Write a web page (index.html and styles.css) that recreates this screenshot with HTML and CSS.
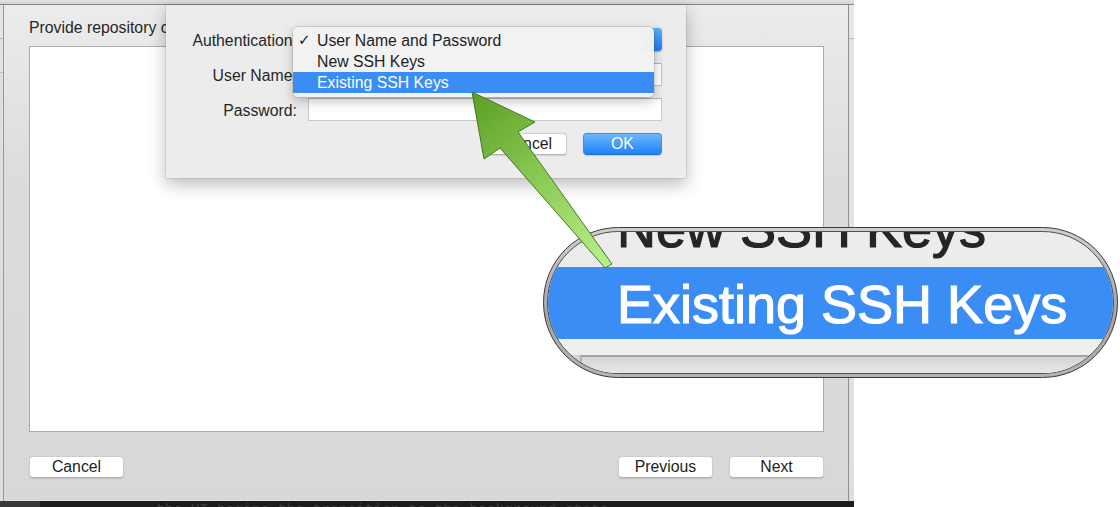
FILE: index.html
```html
<!DOCTYPE html>
<html lang="en">
<head>
    <meta charset="UTF-8">
    <meta name="viewport" content="width=device-width, initial-scale=1.0">
    <title>Repository Authentication</title>
    <link rel="stylesheet" href="styles.css">
</head>
<body>
    <div class="screen">
        <div class="topbar"></div>
        <div class="window">
            <div class="edge edge-left"></div>
            <div class="panel">
                <p class="prompt">Provide repository connection details</p>
                <div class="textbox"></div>
                <div class="footer">
                    <button class="btn">Cancel</button>
                    <div class="spacer"></div>
                    <button class="btn">Previous</button>
                    <button class="btn">Next</button>
                </div>
            </div>
            <div class="edge edge-right"></div>
        </div>
        <div class="console"><span>the UI begins the transition to the background state.</span></div>
    </div>

    <!-- authentication sheet -->
    <div class="sheet">
        <div class="label label-under">Authentication</div>
        <div class="popup">
            <div class="popup-face"></div>
            <div class="popup-arrows"></div>
        </div>
        <div class="label label-under">User Name</div>
        <div class="field"></div>
        <div class="label">Password:</div>
        <div class="field"></div>
        <div class="actions">
            <button class="btn btn-small">Cancel</button>
            <button class="btn btn-small btn-default">OK</button>
        </div>
    </div>

    <div class="menu">
        <div class="item"><span class="check">&#10003;</span>User Name and Password</div>
        <div class="item"><span class="check"></span>New SSH Keys</div>
        <div class="item selected"><span class="check"></span>Existing SSH Keys</div>
    </div>

    <!-- zoomed callout -->
    <div class="magnifier">
        <div class="lens">
            <div class="lens-top"><p>New SSH Keys</p></div>
            <div class="lens-selected">Existing SSH Keys</div>
            <div class="lens-gap"></div>
            <div class="lens-base"><div class="lens-field"></div></div>
        </div>
    </div>

    <svg class="arrow" width="1120" height="507" viewBox="0 0 1120 507">
        <defs>
            <linearGradient id="arrowFill" x1="472" y1="92" x2="610" y2="266" gradientUnits="userSpaceOnUse">
                <stop offset="0" stop-color="#5a9f24"/>
                <stop offset="0.5" stop-color="#8cca56"/>
                <stop offset="1" stop-color="#baf08c"/>
            </linearGradient>
        </defs>
        <polygon points="472,92 535,122 518,132 612,264 605,268 500,148 484,159"
                 fill="url(#arrowFill)" stroke="#3f7a20" stroke-width="1" stroke-linejoin="miter"/>
    </svg>
</body>
</html>
```

FILE: styles.css
```css
* {
    box-sizing: border-box;
}

body {
    margin: 0;
    width: 1120px;
    height: 507px;
    overflow: hidden;
    position: relative;
    background-color: #fff;
    font-family: "Liberation Sans", Arial, sans-serif;
    font-size: 15.8px;
    color: #262626;
}

.screen {
    width: 854px;
    height: 507px;
    display: flex;
    flex-direction: column;
}

.topbar {
    height: 5px;
    background: linear-gradient(#e4e4e4, #d2d2d2);
    border-bottom: 1px solid #878787;
}

.window {
    height: 496px;
    display: flex;
}

.edge {
    background: linear-gradient(#e8e8e8 33px, #b8b8b8 33px, #b8b8b8 34px, #e4e4e4 34px, #dedede);
}

.edge-left {
    width: 4px;
    border-right: 1px solid #9a9a9a;
    background: linear-gradient(#e8e2e2 33px, #b8b8b8 33px, #b8b8b8 34px, #e6e0e0 34px, #e6e0e0 67px, #bdbdbd 67px, #bdbdbd 68px, #e2dcdc 68px);
}

.edge-right {
    width: 6px;
    border-left: 1px solid #8e8e8e;
}

.panel {
    width: 844px;
    padding: 14px 24px 0 25px;
    background: linear-gradient(#ececec, #dcdcdc 35%, #d8d8d8);
    border-bottom: 1px solid #e4e4e4;
}

.prompt {
    margin: 0;
    line-height: 18px;
    white-space: nowrap;
}

.textbox {
    margin-top: 9px;
    height: 386px;
    background-color: #fff;
    border: 1px solid #ababab;
}

.footer {
    display: flex;
    gap: 16px;
    margin-top: 24px;
}

.spacer {
    flex: 1;
}

.btn {
    width: 95px;
    height: 22px;
    padding: 0;
    font: inherit;
    line-height: 20px;
    color: #1e1e1e;
    background-color: #fff;
    border: 1px solid #cdcdcd;
    border-bottom-color: #b4b4b4;
    border-radius: 4px;
    box-shadow: 0 0.5px 1px rgba(0, 0, 0, 0.12);
}

.console {
    height: 6px;
    overflow: hidden;
    padding-left: 156px;
    background: linear-gradient(to right, #383838 40px, #1c1c1c 40px);
    font: 14.5px/15px "Liberation Mono", monospace;
    color: #3c3c3c;
    white-space: nowrap;
}

.console span {
    display: block;
    margin-top: 2px;
}

/* sheet */
.sheet {
    position: absolute;
    left: 166px;
    top: 5px;
    width: 520px;
    height: 173px;
    padding-top: 23px;
    display: grid;
    grid-template-columns: 131px 354px;
    grid-template-rows: 23px 23px 23px 22px;
    column-gap: 11px;
    row-gap: 12px;
    align-content: start;
    background-color: #ececec;
    box-shadow: 0 6px 16px rgba(0, 0, 0, 0.28), 0 0 0 1px rgba(0, 0, 0, 0.07);
}

.label {
    text-align: right;
    line-height: 26px;
    white-space: nowrap;
}

/* the colon of these sits under the open menu */
.label-under {
    padding-right: 4.5px;
}

.popup {
    display: flex;
    border-radius: 4px;
    box-shadow: 0 0.5px 1.5px rgba(0, 0, 0, 0.3);
}

.popup-face {
    flex: 1;
    background-color: #fff;
    border-radius: 4px 0 0 4px;
}

.popup-arrows {
    width: 20px;
    background: linear-gradient(#5fb0fb, #1a7ef6);
    border-radius: 0 4px 4px 0;
}

.field {
    background-color: #fff;
    border: 1px solid #c8c8c8;
    border-top-color: #b5b5b5;
}

.actions {
    grid-column: 2;
    display: flex;
    justify-content: flex-end;
    gap: 16px;
}

.btn-small {
    width: 79px;
}

.btn-default {
    color: #fff;
    background: linear-gradient(#6cb6fc, #1f82f7);
    border-color: #3b8ef0;
    border-bottom-color: #1b6fd8;
}

/* popup menu */
.menu {
    position: absolute;
    left: 293px;
    top: 27px;
    width: 361px;
    height: 70px;
    padding: 3px 0 4px;
    background-color: rgba(242, 242, 242, 0.98);
    border-radius: 5px;
    box-shadow: 0 4px 12px rgba(0, 0, 0, 0.25), 0 0 0 0.5px rgba(0, 0, 0, 0.18);
    color: #222;
}

.item {
    display: flex;
    height: 21px;
    line-height: 21px;
    white-space: nowrap;
}

.check {
    width: 24px;
    padding-left: 5px;
    font-family: "DejaVu Sans", sans-serif;
    font-size: 15px;
    font-weight: bold;
}

.item.selected {
    color: #fff;
    background-color: #3a8df5;
}

/* magnified callout */
.magnifier {
    position: absolute;
    left: 543px;
    top: 227px;
    width: 575px;
    height: 151px;
    padding: 3px;
    border: 1px solid #3a3a3a;
    border-radius: 76px;
    background: linear-gradient(#cfcfcf, #a4a4a4 60%, #b4b4b4);
}

.lens {
    height: 100%;
    overflow: hidden;
    border: 1px solid #505050;
    border-radius: 72px;
    background-color: #ececec;
    font-size: 54px;
    white-space: nowrap;
    -webkit-text-stroke: 1.2px currentColor;
}

.lens-top {
    height: 35px;
    overflow: hidden;
    padding-left: 69px;
    color: #252525;
}

.lens-top p {
    margin: -31px 0 0;
    line-height: 54px;
}

.lens-selected {
    height: 72px;
    overflow: hidden;
    padding: 1px 0 0 69px;
    line-height: 72px;
    color: #fff;
    background-color: #3a8df5;
}

.lens-gap {
    height: 16px;
    background-color: #efefef;
}

.lens-base {
    height: 18px;
    background: linear-gradient(#d2d2d2, #e2e2e2);
}

.lens-field {
    height: 100%;
    margin-left: 32px;
    border-top: 2px solid #a4a4a4;
    border-left: 2px solid #b0b0b0;
    background: linear-gradient(#d6d6d6, #e6e6e6);
}

.arrow {
    position: absolute;
    left: 0;
    top: 0;
    pointer-events: none;
}
```
